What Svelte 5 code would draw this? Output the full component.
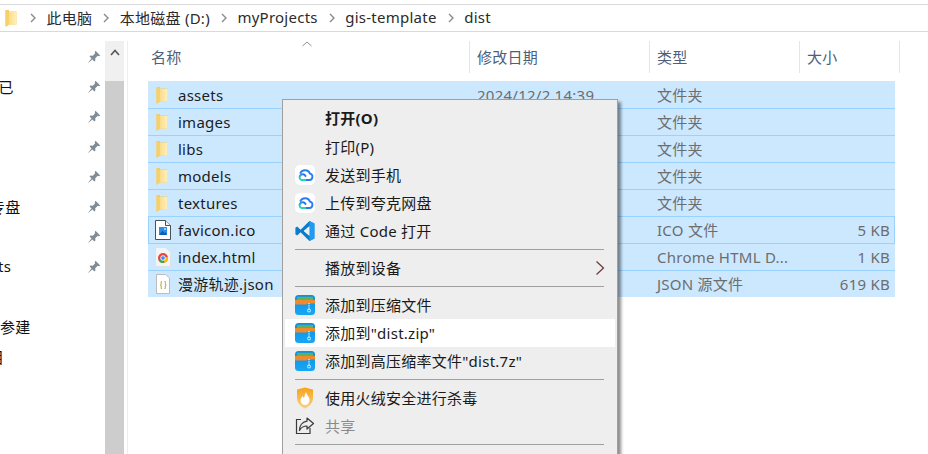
<script lang="ts">
  const crumbs = ["此电脑", "本地磁盘 (D:)", "myProjects", "gis-template", "dist"];

  const navRows = [
    { text: "", offset: 0 },
    { text: "下载已", offset: -32 },
    { text: "", offset: 0 },
    { text: "", offset: 0 },
    { text: "", offset: 0 },
    { text: "专盘", offset: -10 },
    { text: "", offset: 0 },
    { text: "Projects", offset: -47 },
    { text: "", offset: 0, unpinned: true },
    { text: "参建", offset: 0, unpinned: true },
    { text: "目", offset: -11, unpinned: true }
  ];

  const columns = [
    { label: "名称", cls: "c-name" },
    { label: "修改日期", cls: "c-date" },
    { label: "类型", cls: "c-type" },
    { label: "大小", cls: "c-size" }
  ];

  const files = [
    { name: "assets", icon: "folder", date: "2024/12/2 14:39", type: "文件夹", size: "" },
    { name: "images", icon: "folder", date: "2024/12/2 14:39", type: "文件夹", size: "" },
    { name: "libs", icon: "folder", date: "2024/12/2 14:39", type: "文件夹", size: "" },
    { name: "models", icon: "folder", date: "2024/12/2 14:39", type: "文件夹", size: "" },
    { name: "textures", icon: "folder", date: "2024/12/2 14:39", type: "文件夹", size: "" },
    { name: "favicon.ico", icon: "ico", date: "2024/12/2 14:39", type: "ICO 文件", size: "5 KB", focused: true },
    { name: "index.html", icon: "chrome", date: "2024/12/2 14:39", type: "Chrome HTML D...", size: "1 KB" },
    { name: "漫游轨迹.json", icon: "json", date: "2024/12/2 14:39", type: "JSON 源文件", size: "619 KB" }
  ];

  const menu = [
    { label: "打开(O)", bold: true },
    { label: "打印(P)" },
    { label: "发送到手机", icon: "cloud" },
    { label: "上传到夸克网盘", icon: "cloud" },
    { label: "通过 Code 打开", icon: "code" },
    { sep: true },
    { label: "播放到设备", more: true },
    { sep: true },
    { label: "添加到压缩文件", icon: "zip" },
    { label: "添加到\"dist.zip\"", icon: "zip", hover: true },
    { label: "添加到高压缩率文件\"dist.7z\"", icon: "zip" },
    { sep: true },
    { label: "使用火绒安全进行杀毒", icon: "shield" },
    { label: "共享", icon: "share", disabled: true },
    { sep: true }
  ];
</script>

{#snippet folder(w, h)}
  <svg width={w} height={h} viewBox="0 0 12 18">
    <defs>
      <linearGradient id="fold" x1="0" y1="0" x2="1" y2="0">
        <stop offset="0" stop-color="#fbdc84" />
        <stop offset="1" stop-color="#fff0bd" />
      </linearGradient>
    </defs>
    <path d="M0.5 1 H4 V2.5 H11.5 V15.5 H4 L1.5 17.5 H0.5 Z" fill="#f3cb62" />
    <path d="M3.5 3 H11.5 V15.5 H3.5 Z" fill="url(#fold)" />
    <path d="M0.5 1.5 L3.5 3 V15.5 L0.5 17.5 Z" fill="#f6d06a" />
  </svg>
{/snippet}

{#snippet fileIcon(kind)}
  {#if kind === "folder"}
    <span class="folder-shift">{@render folder(12, 18)}</span>
  {:else if kind === "ico"}
    <svg width="16" height="20" viewBox="0 0 16 20">
      <path d="M0.5 0.5 H10.5 L15.5 5.5 V19.5 H0.5 Z" fill="#fff" stroke="#4a5058" />
      <path d="M10.5 0.5 V5.5 H15.5" fill="#f2f2f2" stroke="#4a5058" />
      <rect x="4" y="7" width="8" height="8" fill="#2f8fe6" />
      <path d="M4 15 L7.5 10.5 L9.5 13 L10.5 12 L12 15 Z" fill="#0f5fb5" />
      <circle cx="10" cy="9" r="1" fill="#bfe4ff" />
    </svg>
  {:else if kind === "chrome"}
    <svg width="16" height="20" viewBox="0 0 16 20">
      <path d="M0.5 0.5 H10.5 L15.5 5 V19.5 H0.5 Z" fill="#f2f4f6" stroke="#dde1e5" />
      <circle cx="8" cy="11" r="5" fill="#e8453c" />
      <path d="M8 11 L3.7 13.5 A5 5 0 0 0 9.5 15.8 Z" fill="#34a853" />
      <path d="M8 11 L12.9 10 A5 5 0 0 1 9.5 15.8 Z" fill="#fbbc05" />
      <circle cx="8" cy="11" r="2.3" fill="#4285f4" stroke="#fff" stroke-width="0.9" />
    </svg>
  {:else}
    <svg width="16" height="20" viewBox="0 0 16 20">
      <path d="M1.5 0.5 H10.5 L14.5 4 V19.5 H1.5 Z" fill="#fff" stroke="#bcbcbc" />
      <path d="M7 7.5 H6.2 V10.5 L5.2 11 L6.2 11.5 V14.5 H7 M9.5 7.5 H10.3 V10.5 L11.3 11 L10.3 11.5 V14.5 H9.5" fill="none" stroke="#b6ad3c" stroke-width="1" />
    </svg>
  {/if}
{/snippet}

{#snippet menuIcon(kind)}
  {#if kind === "cloud"}
    <svg width="20" height="20" viewBox="0 0 20 20">
      <defs>
        <linearGradient id="cl" x1="0" y1="1" x2="1" y2="0">
          <stop offset="0" stop-color="#1fe0a0" />
          <stop offset="0.45" stop-color="#2b9cf0" />
          <stop offset="1" stop-color="#2563e6" />
        </linearGradient>
      </defs>
      <rect width="20" height="20" rx="5" fill="#fff" />
      <path d="M6 15 H14.4 A3.2 3.2 0 0 0 15 8.7 A5.2 5.2 0 0 0 5.2 8.6" fill="none" stroke="#2b7cf0" stroke-width="1.9" />
      <path d="M6 15 A3.1 3.1 0 1 1 10.2 10.6 L11 11.6" fill="none" stroke="url(#cl)" stroke-width="1.9" />
      <path d="M6 15 H11" stroke="#1fe0a0" stroke-width="1.9" />
    </svg>
  {:else if kind === "code"}
    <svg width="20" height="22" viewBox="0 0 100 100" preserveAspectRatio="none">
      <path d="M72 4 L97 16 V84 L72 96 L28 56 L11 70 L2 65 V35 L11 30 L28 44 Z M72 28 L44 50 L72 72 Z" fill="#0a7ccc" fill-rule="evenodd" />
      <path d="M72 4 L97 16 V84 L72 96 Z" fill="#1f9cf0" />
      <path d="M72 28 L44 50 L72 72 Z" fill="#eee" />
    </svg>
  {:else if kind === "zip"}
    <svg width="20" height="20" viewBox="0 0 20 20">
      <defs>
        <linearGradient id="zp" x1="0" y1="0" x2="0" y2="1">
          <stop offset="0" stop-color="#0f8fe0" />
          <stop offset="1" stop-color="#17a6f5" />
        </linearGradient>
      </defs>
      <rect width="20" height="20" rx="3.5" fill="url(#zp)" />
      <rect x="2" y="1.8" width="16" height="3.4" fill="#58b368" />
      <path d="M0 5 H20 V8.4 H12.5 L11.5 9.4 H0 Z" fill="#f08a2c" />
      <path d="M14 8 V15" stroke="#bfe6fb" stroke-width="1.6" stroke-dasharray="1.2 1" />
      <circle cx="14" cy="15.5" r="1.5" fill="none" stroke="#d8f1ff" stroke-width="1" />
    </svg>
  {:else if kind === "shield"}
    <svg width="18" height="22" viewBox="0 0 18 22">
      <defs>
        <linearGradient id="sh" x1="0" y1="0" x2="0" y2="1">
          <stop offset="0" stop-color="#f7a21c" />
          <stop offset="1" stop-color="#f9d27c" />
        </linearGradient>
      </defs>
      <path d="M9 0.5 L17 2.5 V11 C17 16 13 19.5 9 21.5 C5 19.5 1 16 1 11 V2.5 Z" fill="url(#sh)" />
      <path d="M10 5 C10.5 8 13.5 9.5 13.5 13 C13.5 16 11.5 18 9 18 C6.5 18 4.5 16 4.5 13.5 C4.5 11.5 5.8 10.5 6.6 9 C7 10 7.3 10.6 8 11 C8.5 9 9 7 10 5 Z" fill="#fff" />
    </svg>
  {:else}
    <svg width="20" height="20" viewBox="0 0 20 20">
      <path d="M6 3.5 H1.5 V17.5 H15 V12" fill="none" stroke="#3a3a3a" stroke-width="1.2" />
      <path d="M12 2 L18.5 7.5 L12 13 V10 C8.5 10 6 11.5 4.5 14.5 C4.5 9.5 7.5 5.8 12 5.2 Z" fill="#eee" stroke="#3a3a3a" stroke-width="1.2" stroke-linejoin="round" />
    </svg>
  {/if}
{/snippet}

<div class="window">
  <header class="address">
    <span class="root-icon">{@render folder(12, 18)}</span>
    {#each crumbs as crumb}
      <svg class="chev" width="6" height="10" viewBox="0 0 6 10">
        <path d="M1 1 L5 5 L1 9" fill="none" stroke="#8a8a8a" stroke-width="1.4" />
      </svg>
      <span class="crumb">{crumb}</span>
    {/each}
  </header>

  <div class="body">
    <nav class="nav">
      {#each navRows as row}
        <div class="nav-row">
          <span class="nav-label" style:margin-left="{row.offset}px">{row.text}</span>
          {#if !row.unpinned}
            <svg class="pin" width="14" height="14" viewBox="0 0 14 14">
              <path d="M8.5 0.8 L13.2 5.5 L11.8 6.3 L10.8 5.8 L8.2 8.2 L8.4 10.6 L7.4 11.4 L2.6 6.6 L3.4 5.6 L5.8 5.8 L8.2 3.2 L7.7 2.2 Z M4.4 8.6 L0.8 13.2 L5.4 9.6 Z" fill="#7f8b95" />
            </svg>
          {/if}
        </div>
      {/each}
    </nav>

    <div class="scrollbar">
      <div class="scroll-up">
        <svg width="10" height="7" viewBox="0 0 10 7">
          <path d="M1 6 L5 1.5 L9 6" fill="none" stroke="#555" stroke-width="1.6" />
        </svg>
      </div>
      <div class="scroll-thumb"></div>
    </div>

    <main class="list">
      <div class="head">
        {#each columns as col}
          <div class="head-cell {col.cls}">{col.label}</div>
        {/each}
        <svg class="sort" width="10" height="6" viewBox="0 0 10 6">
          <path d="M0.5 5 L5 1 L9.5 5" fill="none" stroke="#8a9199" stroke-width="1" />
        </svg>
      </div>

      <div class="rows">
        {#each files as file, i}
          <div class="row" class:first={i === 0} class:focused={file.focused}>
            <div class="name">
              <span class="file-icon">{@render fileIcon(file.icon)}</span>
              <span>{file.name}</span>
            </div>
            <div class="detail">{file.date}</div>
            <div class="detail">{file.type}</div>
            <div class="detail size">{file.size}</div>
          </div>
        {/each}
      </div>
    </main>
  </div>

  <div class="menu">
    {#each menu as item}
      {#if item.sep}
        <div class="sep"></div>
      {:else}
        <div class="item" class:bold={item.bold} class:hover={item.hover} class:disabled={item.disabled}>
          <span class="item-icon">
            {#if item.icon}{@render menuIcon(item.icon)}{/if}
          </span>
          <span class="item-label">{item.label}</span>
          {#if item.more}
            <svg class="more" width="10" height="16" viewBox="0 0 10 16">
              <path d="M1.5 1.5 L8.5 8 L1.5 14.5" fill="none" stroke="#6b3f3f" stroke-width="1.3" />
            </svg>
          {/if}
        </div>
      {/if}
    {/each}
  </div>
</div>

<style>
  :global(body) {
    margin: 0;
    background: #fff;
  }

  .window {
    position: relative;
    width: 928px;
    height: 454px;
    overflow: hidden;
    background: #fff;
    font-family: "Noto Sans", "Noto Sans CJK SC", sans-serif;
    font-size: 15px;
    letter-spacing: 0.25px;
    color: #1c1c1c;
  }

  .address {
    display: flex;
    align-items: center;
    box-sizing: border-box;
    height: 28px;
    margin-top: 4px;
    border-top: 1px solid #d9d9d9;
    border-bottom: 1px solid #d9d9d9;
    padding-left: 5px;
  }

  .address .crumb {
    padding-bottom: 2px;
  }

  .root-icon {
    display: flex;
    margin-right: 13px;
  }

  .chev {
    margin-right: 10.5px;
  }

  .crumb {
    margin-right: 11px;
    white-space: nowrap;
    color: #2b2b2b;
  }

  .body {
    display: flex;
    height: 422px;
    padding-top: 9px;
    box-sizing: border-box;
  }

  .nav {
    width: 105px;
    flex: none;
    overflow: hidden;
    padding-top: 1px;
  }

  .nav-row {
    position: relative;
    display: flex;
    align-items: center;
    height: 30px;
    white-space: nowrap;
    color: #111;
    overflow: hidden;
  }

  .nav-label {
    display: block;
    flex: none;
    padding-bottom: 2px;
  }

  .pin {
    position: absolute;
    left: 87px;
    top: 8px;
  }

  .scrollbar {
    width: 19px;
    flex: none;
    display: flex;
    flex-direction: column;
    background: #f0f0f0;
  }

  .scroll-up {
    height: 40px;
    display: flex;
    justify-content: center;
    padding-top: 8px;
    box-sizing: border-box;
    align-items: flex-start;
  }

  .scroll-thumb {
    flex: 1;
    background: #cdcdcd;
  }

  .list {
    flex: 1;
    margin-left: 3px;
    border-left: 1px solid #eeeeee;
    padding-left: 20px;
  }

  .head {
    position: relative;
    display: flex;
    height: 32px;
    margin-bottom: 8px;
    color: #4c607a;
  }

  .head-cell {
    box-sizing: border-box;
    display: flex;
    align-items: center;
    border-right: 1px solid #e5e5e5;
    padding-bottom: 1px;
  }

  .c-name {
    width: 322px;
    padding-left: 3px;
  }

  .c-date {
    width: 180px;
    padding-left: 7px;
  }

  .c-type {
    width: 150px;
    padding-left: 7px;
  }

  .c-size {
    width: 100px;
    padding-left: 7px;
  }

  .sort {
    position: absolute;
    left: 154px;
    top: 0;
  }

  .rows {
    width: 747px;
  }

  .row {
    display: grid;
    grid-template-columns: 329px 180px 143px 95px;
    align-items: center;
    box-sizing: border-box;
    height: 27px;
    background: #cce8ff;
    border-top: 1px solid #99d1ff;
    padding-bottom: 1px;
  }

  .row.first {
    border-top-color: #cce8ff;
  }

  .row.focused {
    box-shadow: inset 1px 0 #99d1ff, inset -1px 0 #99d1ff;
  }

  .name {
    display: flex;
    align-items: center;
    white-space: nowrap;
  }

  .file-icon {
    display: flex;
    width: 30px;
    padding-left: 7px;
    box-sizing: border-box;
    flex: none;
  }

  .folder-shift {
    display: flex;
    margin-left: 1px;
  }

  .detail {
    color: #6d6d6d;
    white-space: nowrap;
  }

  .size {
    text-align: right;
    padding-right: 5px;
  }

  .menu {
    position: absolute;
    left: 282px;
    top: 99px;
    width: 336px;
    height: 370px;
    box-sizing: border-box;
    padding: 4px 2px;
    background: #eeeeee;
    border: 1px solid #a0a0a0;
    box-shadow: 3px 3px 3px rgba(0, 0, 0, 0.45);
  }

  .item {
    display: flex;
    align-items: center;
    height: 28px;
    color: #1a1a1a;
    white-space: nowrap;
  }

  .item.bold {
    font-weight: 700;
    margin-bottom: 1px;
  }

  .item.hover {
    background: #fff;
  }

  .item-label {
    padding-bottom: 2px;
  }

  .item.disabled .item-label {
    color: #8a8a8a;
  }

  .item-icon {
    display: flex;
    justify-content: center;
    width: 20px;
    margin-left: 10px;
    margin-right: 10px;
    flex: none;
  }

  .more {
    position: absolute;
    left: 312px;
  }

  .sep {
    height: 1px;
    margin: 4px 11px 4px 10px;
    background: #a0a0a0;
  }
</style>
